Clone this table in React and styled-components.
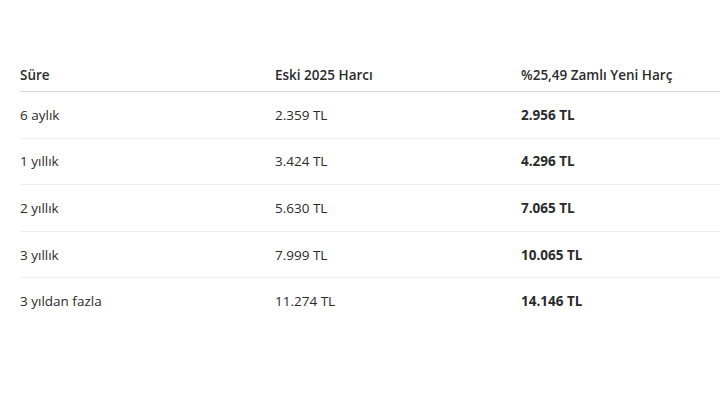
import React from "react";
import styled, { createGlobalStyle } from "styled-components";

const GlobalStyle = createGlobalStyle`
  html, body {
    margin: 0;
    padding: 0;
    background: #ffffff;
  }
  body {
    font-family: "Open Sans", "Noto Sans", sans-serif;
    color: #2b2b2b;
  }
`;

const Page = styled.div`
  width: 720px;
  height: 400px;
  padding: 59px 0 0 20px;
  box-sizing: border-box;
  overflow: hidden;
`;

const Row = styled.div`
  display: grid;
  grid-template-columns: 255px 246px 1fr;
  align-items: center;
  height: ${(p) => (p.head ? "32px" : "45.6px")};
  border-bottom: 1px solid ${(p) => (p.head ? "#d4d4d4" : p.last ? "transparent" : "#efefef")};
  font-size: 13.5px;
`;

const Cell = styled.div`
  font-weight: ${(p) => (p.bold ? 700 : p.semi ? 600 : 400)};
  white-space: nowrap;
`;

const rows = [
  ["6 aylık", "2.359 TL", "2.956 TL"],
  ["1 yıllık", "3.424 TL", "4.296 TL"],
  ["2 yıllık", "5.630 TL", "7.065 TL"],
  ["3 yıllık", "7.999 TL", "10.065 TL"],
  ["3 yıldan fazla", "11.274 TL", "14.146 TL"],
];

export default function App() {
  return (
    <Page>
      <GlobalStyle />
      <Row head>
        <Cell semi>Süre</Cell>
        <Cell semi>Eski 2025 Harcı</Cell>
        <Cell semi>%25,49 Zamlı Yeni Harç</Cell>
      </Row>
      {rows.map((r, i) => (
        <Row key={i} last={i === rows.length - 1}>
          <Cell>{r[0]}</Cell>
          <Cell>{r[1]}</Cell>
          <Cell bold>{r[2]}</Cell>
        </Row>
      ))}
    </Page>
  );
}
